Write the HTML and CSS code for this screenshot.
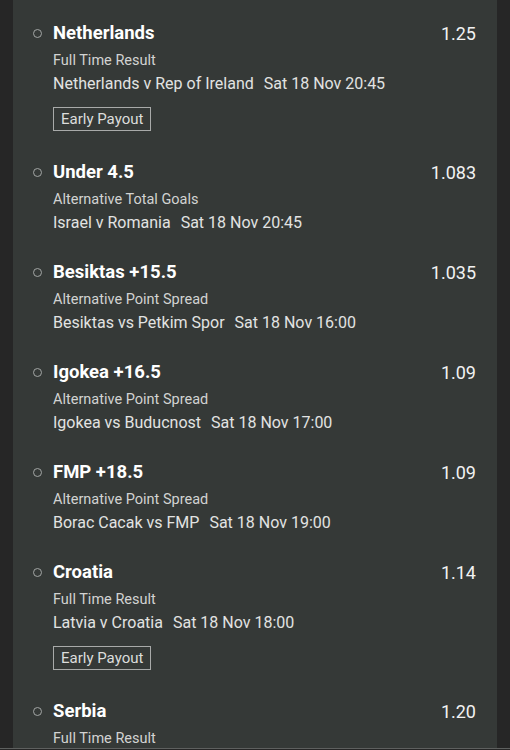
FILE: index.html
```html
<!DOCTYPE html>
<html>
<head>
<meta charset="utf-8">
<link rel="stylesheet" href="styles.css">
</head>
<body>
<div class="screen">
<div class="panel">
  <div class="bet">
    <div class="head"><span class="dot"></span><span class="title">Netherlands</span><span class="odds">1.25</span></div>
    <div class="market">Full Time Result</div>
    <div class="match"><span>Netherlands v Rep of Ireland</span><span>Sat 18 Nov 20:45</span></div>
    <div class="payout">Early Payout</div>
  </div>
  <div class="bet">
    <div class="head"><span class="dot"></span><span class="title">Under 4.5</span><span class="odds">1.083</span></div>
    <div class="market">Alternative Total Goals</div>
    <div class="match"><span>Israel v Romania</span><span>Sat 18 Nov 20:45</span></div>
  </div>
  <div class="bet">
    <div class="head"><span class="dot"></span><span class="title">Besiktas +15.5</span><span class="odds">1.035</span></div>
    <div class="market">Alternative Point Spread</div>
    <div class="match"><span>Besiktas vs Petkim Spor</span><span>Sat 18 Nov 16:00</span></div>
  </div>
  <div class="bet">
    <div class="head"><span class="dot"></span><span class="title">Igokea +16.5</span><span class="odds">1.09</span></div>
    <div class="market">Alternative Point Spread</div>
    <div class="match"><span>Igokea vs Buducnost</span><span>Sat 18 Nov 17:00</span></div>
  </div>
  <div class="bet">
    <div class="head"><span class="dot"></span><span class="title">FMP +18.5</span><span class="odds">1.09</span></div>
    <div class="market">Alternative Point Spread</div>
    <div class="match"><span>Borac Cacak vs FMP</span><span>Sat 18 Nov 19:00</span></div>
  </div>
  <div class="bet">
    <div class="head"><span class="dot"></span><span class="title">Croatia</span><span class="odds">1.14</span></div>
    <div class="market">Full Time Result</div>
    <div class="match"><span>Latvia v Croatia</span><span>Sat 18 Nov 18:00</span></div>
    <div class="payout">Early Payout</div>
  </div>
  <div class="bet">
    <div class="head"><span class="dot"></span><span class="title">Serbia</span><span class="odds">1.20</span></div>
    <div class="market">Full Time Result</div>
  </div>
</div>
</div>
<div class="edge"></div>
</body>
</html>
```
FILE: styles.css
```css
html, body {
  margin: 0;
  padding: 0;
  background: #262626;
  height: 750px;
  overflow: hidden;
}
body {
  font-family: Roboto, "Noto Sans", sans-serif;
}
.screen {
  height: 748px;
  overflow: hidden;
}
.edge {
  height: 1px;
  background: #5e605f;
}
.panel {
  margin: 0 13px;
  background: #353937;
  height: 748px;
  padding: 19px 21px 0 20px;
  box-sizing: border-box;
}
.bet {
  padding-bottom: 23px;
}
.bet:has(.payout) {
  padding-bottom: 27px;
}
.head {
  display: flex;
  align-items: center;
  height: 28px;
}
.dot {
  width: 9px;
  height: 9px;
  border: 1.4px solid #a3a6a5;
  border-radius: 50%;
  box-sizing: border-box;
  margin-right: 11px;
  flex: none;
}
.title {
  color: #ffffff;
  font-weight: 700;
  font-size: 18.5px;
  flex: 1;
}
.odds {
  color: #f2f2f2;
  font-size: 18px;
}
.market {
  color: #d2d3d2;
  font-size: 14.5px;
  line-height: 24px;
  padding: 2px 0 0 20px;
}
.match {
  color: #e2e3e2;
  font-size: 16px;
  line-height: 24px;
  padding-left: 20px;
  margin-top: -1px;
  display: flex;
  gap: 10px;
}
.payout {
  margin: 11px 0 0 20px;
  display: inline-block;
  border: 1px solid #a8aaa9;
  color: #dcdddc;
  font-size: 15px;
  line-height: 22px;
  padding: 0 7px;
}
```
